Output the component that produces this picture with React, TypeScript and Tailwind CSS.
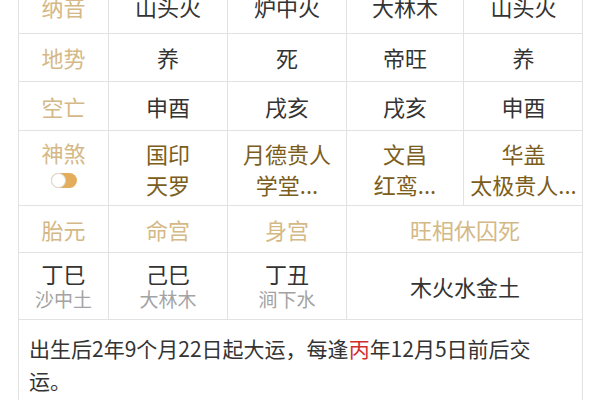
import React from "react";

const LABEL = "text-[#d4b987]";
const VAL = "text-[#333333]";
const SHA = "text-[#7b5d20]";

const cols = ["w-[90px]", "w-[119px]", "w-[119px]", "w-[117px]", "w-[119px]"];

function Cell({ w, children, last, className = "" }: { w: string; children: React.ReactNode; last?: boolean; className?: string }) {
  return (
    <div className={`${w} shrink-0 flex flex-col items-center justify-center ${last ? "" : "border-r border-[#e2e2e2]"} ${className}`}>
      {children}
    </div>
  );
}

function Row({ h, children }: { h: string; children: React.ReactNode }) {
  return <div className={`flex ${h} border-b border-[#e2e2e2]`}>{children}</div>;
}

function SimpleRow({ h, label, vals }: { h: string; label: string; vals: string[] }) {
  return (
    <Row h={h}>
      <Cell w={cols[0]}><span className={LABEL}>{label}</span></Cell>
      {vals.map((v, i) => (
        <Cell key={i} w={cols[i + 1]} last={i === 3}><span className={VAL}>{v}</span></Cell>
      ))}
    </Row>
  );
}

export default function App() {
  return (
    <div className="w-[600px] h-[400px] overflow-hidden bg-white" style={{ fontFamily: '"Noto Sans CJK SC", "Noto Sans", sans-serif' }}>
      <div className="ml-[18px] w-[565px] mt-[-21px] border-l border-r border-[#e2e2e2] text-[22px] leading-[31px]">
        <SimpleRow h="h-[55px]" label="纳音" vals={["山头火", "炉中火", "大林木", "山头火"]} />
        <SimpleRow h="h-[48px]" label="地势" vals={["养", "死", "帝旺", "养"]} />
        <SimpleRow h="h-[49px]" label="空亡" vals={["申酉", "戌亥", "戌亥", "申酉"]} />
        <Row h="h-[75px]">
          <Cell w={cols[0]} className="justify-start pt-[6px]">
            <span className={LABEL}>神煞</span>
            <span className="mt-[5px] relative w-[26px] h-[15px] rounded-full bg-[#e3ad5c] flex items-center">
              <span className="w-[15px] h-[15px] rounded-full bg-white border border-[#dcdcdc]" />
            </span>
          </Cell>
          <Cell w={cols[1]} className="pt-[2px]"><span className={SHA}>国印</span><span className={SHA}>天罗</span></Cell>
          <Cell w={cols[2]} className="pt-[2px]"><span className={SHA}>月德贵人</span><span className={SHA}>学堂...</span></Cell>
          <Cell w={cols[3]} className="pt-[2px]"><span className={SHA}>文昌</span><span className={SHA}>红鸾...</span></Cell>
          <Cell w={cols[4]} last className="pt-[2px]"><span className={SHA}>华盖</span><span className={`${SHA} whitespace-nowrap`}>太极贵人...</span></Cell>
        </Row>
        <Row h="h-[47px]">
          <Cell w={cols[0]}><span className={LABEL}>胎元</span></Cell>
          <Cell w={cols[1]}><span className={LABEL}>命宫</span></Cell>
          <Cell w={cols[2]}><span className={LABEL}>身宫</span></Cell>
          <Cell w="w-[236px]" last><span className={LABEL}>旺相休囚死</span></Cell>
        </Row>
        <Row h="h-[67px]">
          <Cell w={cols[0]}><span className={`${VAL} leading-[26px]`}>丁巳</span><span className="text-[#a3a3a3] text-[19px] leading-[26px]">沙中土</span></Cell>
          <Cell w={cols[1]}><span className={`${VAL} leading-[26px]`}>己巳</span><span className="text-[#a3a3a3] text-[19px] leading-[26px]">大林木</span></Cell>
          <Cell w={cols[2]}><span className={`${VAL} leading-[26px]`}>丁丑</span><span className="text-[#a3a3a3] text-[19px] leading-[26px]">涧下水</span></Cell>
          <Cell w="w-[236px]" last><span className={VAL}>木火水金土</span></Cell>
        </Row>
        <div className="pl-[10px] pr-[36px] pt-[12px] pb-[12px] text-[21px] leading-[32px] text-[#333333]">
          出生后2年9个月22日起大运，每逢<span className="text-[#d0302c]">丙</span>年12月5日前后交运。
        </div>
      </div>
    </div>
  );
}
